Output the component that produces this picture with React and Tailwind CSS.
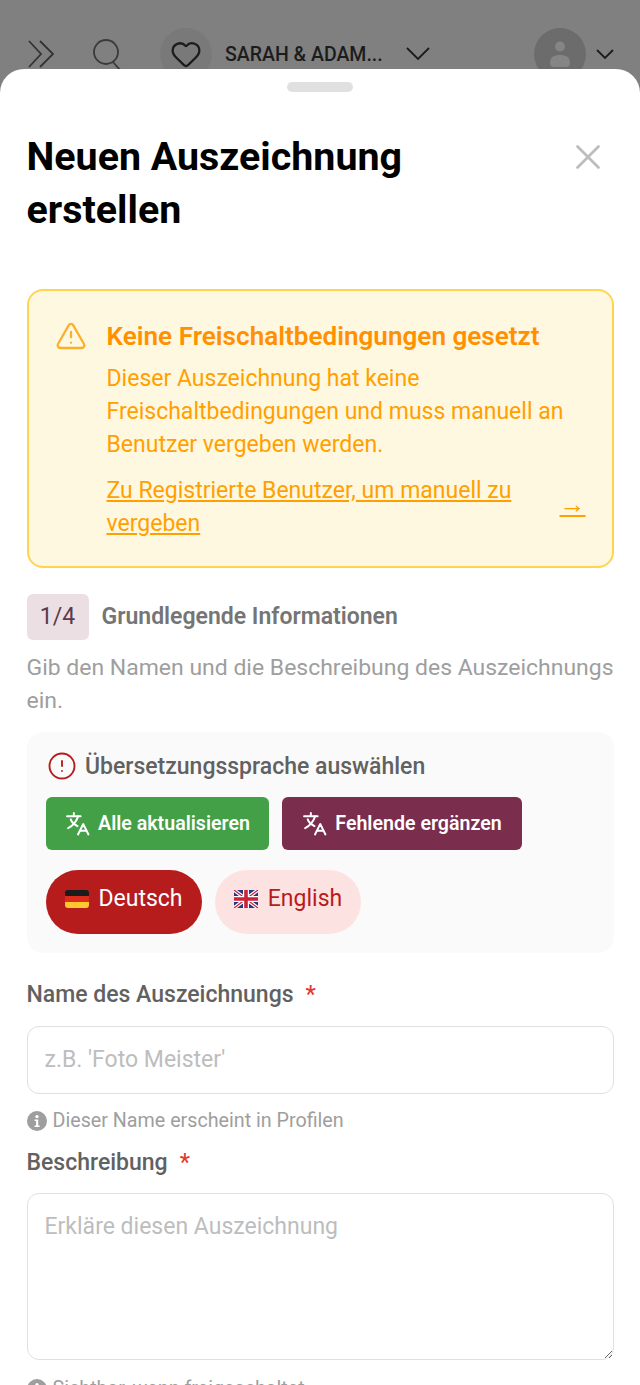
import React from "react";
import { Heart, CircleAlert, TriangleAlert, X } from "lucide-react";

const Translate = () => (
  <svg width="25" height="25" viewBox="0 0 24 24" fill="none" stroke="currentColor" strokeWidth="1.9" strokeLinecap="round" strokeLinejoin="round" className="shrink-0">
    <path d="M2 5h13M8.5 2v3" />
    <path d="M12.5 5c-1 4.5-5 9.5-9.5 11.5" />
    <path d="M5.5 8c1 3 3.5 5 6.5 6.5" />
    <path d="M22.5 22.5l-5-10-5 10M14.2 19h6.6" />
  </svg>
);

const Info = () => (
  <svg width="20" height="20" viewBox="0 0 20 20" className="shrink-0">
    <circle cx="10" cy="10" r="10" fill="#9e9e9e" />
    <circle cx="10" cy="5.6" r="1.7" fill="#fff" />
    <path d="M7.6 8.4h3.6v6h1.4v1.6H7.6v-1.6h1.5V10H7.6z" fill="#fff" />
  </svg>
);

const Germany = () => (
  <svg width="24" height="18" viewBox="0 0 24 18" className="shrink-0">
    <defs><clipPath id="de"><rect width="24" height="18" rx="3" /></clipPath></defs>
    <g clipPath="url(#de)">
      <rect width="24" height="6" fill="#1c1c1c" />
      <rect y="6" width="24" height="6" fill="#dd2c1c" />
      <rect y="12" width="24" height="6" fill="#fdc82f" />
    </g>
  </svg>
);

const UK = () => (
  <svg width="24" height="18" viewBox="0 0 24 18" className="shrink-0">
    <rect width="24" height="18" fill="#27377e" />
    <path d="M0 0l24 18M24 0L0 18" stroke="#fff" strokeWidth="3.6" />
    <path d="M0 0l24 18M24 0L0 18" stroke="#c8233a" strokeWidth="1.3" />
    <path d="M12 0v18M0 9h24" stroke="#fff" strokeWidth="6" />
    <path d="M12 0v18M0 9h24" stroke="#c8233a" strokeWidth="3.6" />
  </svg>
);

function Header() {
  return (
    <div className="h-[69px] overflow-hidden bg-[#808080] pt-[28px] pl-[28px] pr-[26px] flex items-start text-[#1c1c1c]">
      <svg width="26" height="28" viewBox="0 0 26 28" fill="none" stroke="#333" strokeWidth="1.8" className="mt-[12px] shrink-0">
        <path d="M1 1l12 13L1 27M12 1l13 13-13 13" />
      </svg>
      <svg width="30" height="34" viewBox="0 0 30 34" fill="none" stroke="#3a3a3a" strokeWidth="1.8" className="mt-[11px] ml-[38px] shrink-0">
        <circle cx="14" cy="13" r="12" />
        <path d="M21 23l7 8" />
      </svg>
      <div className="ml-[38px] w-[52px] h-[52px] rounded-full bg-[#797979] flex items-center justify-center shrink-0">
        <Heart size={32} strokeWidth={1.7} color="#1c1c1c" />
      </div>
      <span className="ml-[13px] mt-[14px] w-[181px] text-[19.5px] leading-[26px] font-medium whitespace-nowrap">SARAH &amp; ADAM...</span>
      <svg width="24" height="14" viewBox="0 0 24 14" fill="none" stroke="#1c1c1c" strokeWidth="1.8" className="mt-[19px] shrink-0">
        <path d="M1 1l11 11L23 1" />
      </svg>
      <div className="ml-auto w-[52px] h-[52px] rounded-full bg-[#6c6c6c] flex items-center justify-center shrink-0">
        <svg width="22" height="28" viewBox="0 0 22 28" fill="#858585">
          <circle cx="11" cy="6.5" r="5" />
          <path d="M1 23c0-6 4-8 10-8s10 2 10 8c0 3-2 4-4 4H5c-2 0-4-1-4-4z" />
        </svg>
      </div>
      <svg width="18" height="11" viewBox="0 0 18 11" fill="none" stroke="#1c1c1c" strokeWidth="1.8" className="mt-[21px] ml-[10px] shrink-0">
        <path d="M1 1l8 8 8-8" />
      </svg>
    </div>
  );
}

function Notice() {
  return (
    <div className="mt-[53px] h-[279px] rounded-[16px] border-2 border-[#ffd54f] bg-[#fff8e1] pl-[26px] pr-[26px] pt-[30px] flex gap-[20px]">
      <TriangleAlert size={32} strokeWidth={1.7} color="#fbb02d" className="shrink-0 mt-[-1px]" />
      <div className="flex-1 min-w-0 text-[23px] leading-[33px] text-[#ffa000]">
        <div className="text-[26.1px] leading-[30px] font-semibold text-[#ff9100]">Keine Freischaltbedingungen gesetzt</div>
        <p className="mt-[11px]">Dieser Auszeichnung hat keine Freischaltbedingungen und muss manuell an Benutzer vergeben werden.</p>
        <div className="mt-[13px] flex items-center justify-between">
          <span className="underline w-[420px]">Zu Registrierte Benutzer, um manuell zu vergeben</span>
          <span className="underline text-[26px] leading-[33px] mb-[5px]">→</span>
        </div>
      </div>
    </div>
  );
}

function Panel() {
  return (
    <div className="mt-[15px] h-[221px] rounded-[16px] bg-[#fafafa] pl-[19.5px] pt-[18px]">
      <div className="flex items-center gap-[8px] pl-[1px] h-[32px]">
        <CircleAlert size={30} strokeWidth={1.5} color="#b71c1c" className="shrink-0" />
        <span className="text-[23px] font-medium text-[#616161] pt-[2px]">Übersetzungssprache auswählen</span>
      </div>
      <div className="mt-[15px] flex gap-[13px]">
        <button className="h-[53px] w-[223px] rounded-[6px] bg-[#43a047] text-white flex items-center justify-center gap-[8px] text-[19.6px] font-semibold">
          <Translate />Alle aktualisieren
        </button>
        <button className="h-[53px] w-[240px] rounded-[6px] bg-[#7b2d4e] text-white flex items-center justify-center gap-[8px] text-[19.6px] font-semibold">
          <Translate />Fehlende ergänzen
        </button>
      </div>
      <div className="mt-[20px] flex gap-[13px]">
        <button className="h-[64px] w-[156px] rounded-full bg-[#b71c1c] text-white flex items-center justify-center gap-[9px] pb-[6px] text-[23px]">
          <Germany />Deutsch
        </button>
        <button className="h-[64px] w-[146px] rounded-full bg-[#fde2e2] text-[#b71c1c] flex items-center justify-center gap-[10px] pb-[6px] text-[23px]">
          <UK />English
        </button>
      </div>
    </div>
  );
}

function Label({ children }) {
  return (
    <div className="text-[23px] leading-[30px] font-medium text-[#616161]">
      {children}<span className="ml-[12px] text-[#e53935]">*</span>
    </div>
  );
}

function Help({ children }) {
  return (
    <div className="flex items-center gap-[6px] text-[19.7px] leading-[26px] text-[#9e9e9e]">
      <Info />{children}
    </div>
  );
}

const field = "block w-full rounded-[12px] border-[1.5px] border-[#e0e0e0] bg-white px-[17px] text-[23px] text-[#424242] outline-none placeholder:text-[#bdbdbd]";

export default function App() {
  return (
    <div className="h-[1385px] overflow-hidden bg-[#808080] font-['Roboto',sans-serif]">
      <Header />
      <div className="relative h-[1316px] rounded-t-[24px] bg-white px-[26.5px]">
        <div className="mx-auto w-[66px] h-[10px] relative top-[13px] rounded-full bg-[#e0e0e0]" />
        <div className="pt-[51px] flex items-start justify-between">
          <h1 className="w-[420px] text-[39.4px] leading-[53px] font-bold text-black">Neuen Auszeichnung erstellen</h1>
          <X size={42} strokeWidth={1.6} color="#bdbdbd" className="mt-[6px] mr-[5px]" />
        </div>
        <Notice />
        <div className="mt-[26px] flex items-center gap-[13px]">
          <div className="w-[62px] h-[46px] rounded-[6px] bg-[#ecdfe4] flex items-center justify-center text-[23px] text-[#5d3a4a]">1/4</div>
          <div className="text-[23px] font-semibold text-[#757575]">Grundlegende Informationen</div>
        </div>
        <p className="mt-[11px] mr-[-6px] text-[22.98px] leading-[33px] text-[#9e9e9e]">Gib den Namen und die Beschreibung des Auszeichnungs ein.</p>
        <Panel />
        <div className="mt-[27px]"><Label>Name des Auszeichnungs</Label></div>
        <input className={`${field} mt-[16px] h-[68px] pb-[2px]`} placeholder="z.B. 'Foto Meister'" />
        <div className="mt-[14px]"><Help>Dieser Name erscheint in Profilen</Help></div>
        <div className="mt-[14px]"><Label>Beschreibung</Label></div>
        <textarea className={`${field} mt-[15px] h-[167px] py-[16px]`} placeholder="Erkläre diesen Auszeichnung" />
        <div className="mt-[16px]"><Help>Sichtbar, wenn freigeschaltet</Help></div>
      </div>
    </div>
  );
}
